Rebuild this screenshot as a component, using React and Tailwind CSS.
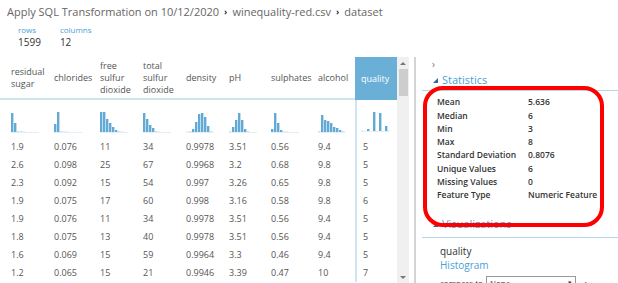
import React from 'react';

const columns = [
  { name: ['residual', 'sugar'], w: 'w-[43px]', hist: [19, 9, 1, 1, 0.5] },
  { name: ['chlorides'], w: 'w-[46px]', hist: [8, 20, 1, 0.5, 0.5] },
  { name: ['free', 'sulfur', 'dioxide'], w: 'w-[43px]', hist: [20, 20, 13, 9, 5, 2, 1, 0.5] },
  { name: ['total', 'sulfur', 'dioxide'], w: 'w-[43px]', hist: [19, 13, 7, 4, 1, 0.5] },
  { name: ['density'], w: 'w-[43px]', hist: [0.5, 1, 3, 10, 18, 19, 15, 6, 1] },
  { name: ['pH'], w: 'w-[42px]', hist: [1, 5, 12, 19, 12, 3, 1] },
  { name: ['sulphates'], w: 'w-[47px]', hist: [3, 19, 9, 2, 0.5, 0.5] },
  { name: ['alcohol'], w: 'w-[37px]', hist: [1, 17, 12, 11, 9, 5, 4, 2, 1] },
];

const rows = [
  ['1.9', '0.076', '11', '34', '0.9978', '3.51', '0.56', '9.4', '5'],
  ['2.6', '0.098', '25', '67', '0.9968', '3.2', '0.68', '9.8', '5'],
  ['2.3', '0.092', '15', '54', '0.997', '3.26', '0.65', '9.8', '5'],
  ['1.9', '0.075', '17', '60', '0.998', '3.16', '0.58', '9.8', '6'],
  ['1.9', '0.076', '11', '34', '0.9978', '3.51', '0.56', '9.4', '5'],
  ['1.8', '0.075', '13', '40', '0.9978', '3.51', '0.56', '9.4', '5'],
  ['1.6', '0.069', '15', '59', '0.9964', '3.3', '0.46', '9.4', '5'],
  ['1.2', '0.065', '15', '21', '0.9946', '3.39', '0.47', '10', '7'],
];

const stats = [
  ['Mean', '5.636'],
  ['Median', '6'],
  ['Min', '3'],
  ['Max', '8'],
  ['Standard Deviation', '0.8076'],
  ['Unique Values', '6'],
  ['Missing Values', '0'],
  ['Feature Type', 'Numeric Feature'],
];

function Histogram({ bars }) {
  return (
    <svg width="30" height="22" viewBox="0 0 30 22">
      {bars.map((h, i) => (
        <rect key={i} x={i * 3} y={21 - h} width="2.4" height={h} fill={h < 1.5 ? '#c9e2f1' : '#62aad5'} />
      ))}
      <rect x="0" y="21" width="28" height="1" fill="#e3eff7" />
    </svg>
  );
}

export default function App() {
  return (
    <div className="relative w-[618px] h-[283px] overflow-hidden bg-white text-[#444] font-['Open_Sans',sans-serif]">
      {/* Breadcrumb */}
      <div className="pl-[7px] pt-[3px] h-[21px] flex items-center gap-[5px] text-[11px] text-[#666]">
        <span>Apply SQL Transformation on 10/12/2020</span>
        <span className="text-[9px] text-[#333] font-bold">›</span>
        <span>winequality-red.csv</span>
        <span className="text-[9px] text-[#333] font-bold">›</span>
        <span>dataset</span>
      </div>

      {/* rows / columns */}
      <div className="flex gap-[19px] pl-[18px] pt-[3px] h-[36px]">
        <div className="flex flex-col">
          <span className="text-[8px] leading-[11px] text-[#4a9fd5]">rows</span>
          <span className="text-[10px] leading-[14px] text-[#333]">1599</span>
        </div>
        <div className="flex flex-col">
          <span className="text-[8px] leading-[11px] text-[#4a9fd5]">columns</span>
          <span className="text-[10px] leading-[14px] text-[#333]">12</span>
        </div>
      </div>

      <div className="flex">
        {/* Table */}
        <div className="w-[397px] shrink-0 border-b border-[#ddd]">
          <div className="flex h-[43px] pl-[11px] border-b-2 border-[#cfe4f1]">
            {columns.map((c) => (
              <div key={c.name.join()} className={`${c.w} shrink-0 flex flex-col justify-center text-[9px] leading-[12px] text-[#555]`}>
                {c.name.map((l) => (
                  <span key={l}>{l}</span>
                ))}
              </div>
            ))}
            <div className="w-[42px] shrink-0 bg-[#6aafd6] -mb-[2px] flex items-center pl-[6px] text-[9px] text-white">
              quality
            </div>
          </div>
          <div className="flex pl-[11px] h-[38px] items-center">
            {columns.map((c) => (
              <div key={c.name.join()} className={`${c.w} shrink-0 pt-[5px]`}>
                <Histogram bars={c.hist} />
              </div>
            ))}
            <div className="w-[42px] h-full shrink-0 border-l-2 border-[#cfe4f1] pl-[4px] pt-[10px]">
              <Histogram bars={[0.5, 0, 2, 0, 19, 0, 18, 0, 5, 0.5]} />
            </div>
          </div>
          {rows.map((r, i) => (
            <div key={i} className="flex pl-[11px] h-[18px] text-[9px] text-[#555]">
              {columns.map((c, j) => (
                <div key={j} className={`${c.w} shrink-0 flex items-center`}>
                  {r[j]}
                </div>
              ))}
              <div className="w-[42px] shrink-0 border-l-2 border-[#cfe4f1] pl-[6px] flex items-center">{r[8]}</div>
            </div>
          ))}
        </div>

        {/* Scrollbar */}
        <div className="w-[12px] h-[226px] bg-[#f0f0f0] flex flex-col items-center">
          <div className="h-[12px] flex items-center">
            <div className="w-0 h-0 border-x-[3px] border-x-transparent border-b-[3px] border-b-[#777]" />
          </div>
          <div className="w-[9px] h-[27px] bg-[#cdcdcd]" />
          <div className="flex-1" />
          <div className="h-[12px] flex items-center">
            <div className="w-0 h-0 border-x-[3px] border-x-transparent border-t-[3px] border-t-[#777]" />
          </div>
        </div>

        <div className="w-[5px]" />
        <div className="w-[2px] h-[226px] bg-[#d4d4d4]" />

        {/* Right panel */}
        <div className="flex-1 pl-[6px]">
          <div className="pl-[10px] h-[14px] text-[10px] leading-[14px] text-[#777]">›</div>
          <div className="flex items-center h-[18px] pl-[11px] gap-[4px]">
            <svg width="5" height="5" viewBox="0 0 5 5"><path d="M5 0 L5 5 L0 5 Z" fill="#2b6d9e" /></svg>
            <span className="text-[11px] text-[#4a9fd5]">Statistics</span>
          </div>
          <div className="h-px bg-[#b5d6e8] mt-[1px]" />
          <div className="pl-[15px] pt-[5px] flex flex-col">
            {stats.map(([k, v]) => (
              <div key={k} className="flex h-[13.3px] items-center text-[8.5px] text-[#333] font-semibold">
                <span className="w-[91px]">{k}</span>
                <span>{v}</span>
              </div>
            ))}
          </div>
          <div className="flex items-center h-[18px] pl-[11px] gap-[4px] mt-[13px]">
            <svg width="5" height="5" viewBox="0 0 5 5"><path d="M5 0 L5 5 L0 5 Z" fill="#2b6d9e" /></svg>
            <span className="text-[11px] text-[#4a9fd5]">Visualizations</span>
          </div>
          <div className="h-px bg-[#b5d6e8] mt-[4px]" />
          <div className="pl-[18px] pt-[6px] flex flex-col">
            <span className="text-[10px] leading-[14px] text-[#333]">quality</span>
            <span className="text-[10px] leading-[14px] text-[#4a9fd5]">Histogram</span>
            <div className="flex items-center gap-[3px] mt-[4px] text-[8px] text-[#444]">
              <span>compare to</span>
              <div className="w-[90px] h-[14px] border border-[#999] px-[3px] flex items-center justify-between">
                <span>None</span>
                <span className="text-[7px]">▾</span>
              </div>
              <span className="ml-[6px]">▸</span>
            </div>
          </div>
        </div>
      </div>

      {/* Red annotation */}
      <div className="absolute left-[423px] top-[86px] w-[181px] h-[141px] border-[4px] border-[#ff0000] rounded-[20px]" />
    </div>
  );
}
